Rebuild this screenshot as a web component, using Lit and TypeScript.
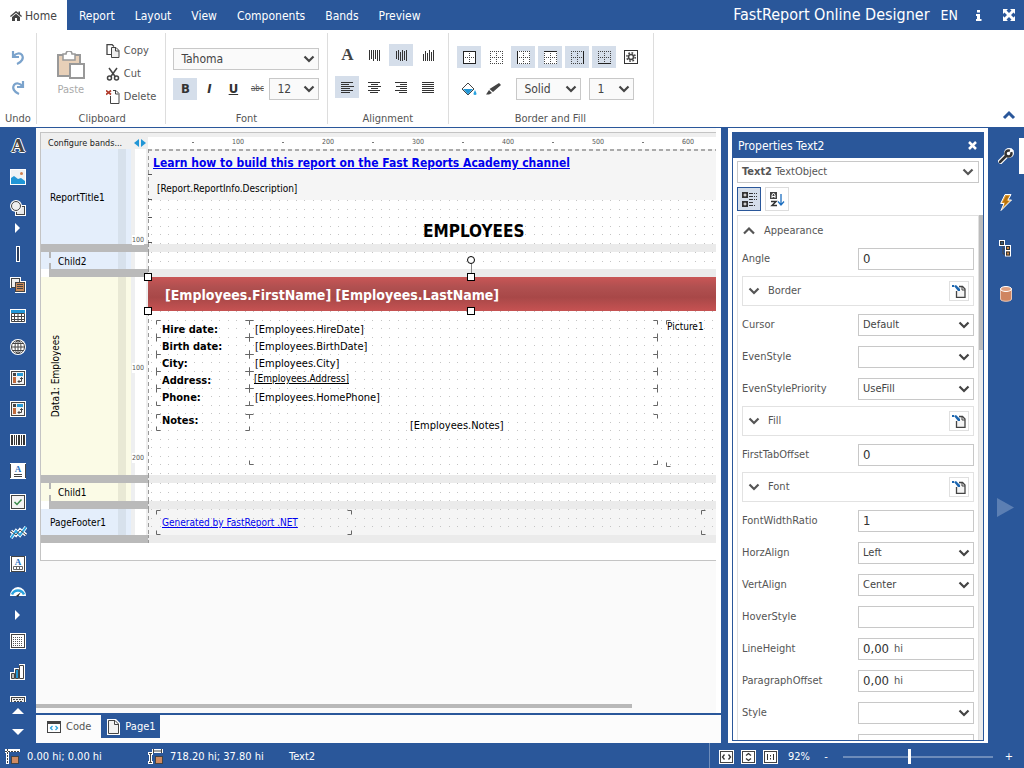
import { LitElement, html, svg, css, nothing, TemplateResult } from "lit";
import { customElement, state } from "lit/decorators.js";
import { classMap } from "lit/directives/class-map.js";
import { styleMap } from "lit/directives/style-map.js";

type Corner = [number, number, number, number];
type Label = { x: number; y: number; text: string; cls: string; link?: boolean };
type Band = {
  name: string;
  kind: "blue" | "yellow";
  height: number;
  child?: boolean;
  vertical?: boolean;
  marks?: number[];
  shade?: number;
  boxes?: Corner[];
  labels?: Label[];
  ticks?: number[];
  selected?: boolean;
};

const icon = (w: number, h: number, body: TemplateResult, cls = "") =>
  html`<svg class="ico ${cls}" width=${w} height=${h} viewBox="0 0 ${w} ${h}" aria-hidden="true">${body}</svg>`;

const chevron = (cls = "chev") =>
  html`<svg class=${cls} width="12" height="12" viewBox="0 0 12 12" aria-hidden="true">
    <path d="M1.500 3.500L6 8l4.500-4.500" fill="none" stroke="currentColor" stroke-width="2.200" />
  </svg>`;

const rowsPath = (rows: [number, number][], y0 = 1, step = 2) =>
  rows.map(([a, b], i) => `M${a} ${y0 + i * step}h${b - a}v1h${a - b}z`).join("");

const colsPath = (cols: [number, number][], x0 = 1, step = 2) =>
  cols.map(([a, b], i) => `M${x0 + i * step} ${a}h1v${b - a}h-1z`).join("");

const solid = (d: string) =>
  icon(13, 13, svg`<path d=${d} fill="#333" shape-rendering="crispEdges" />`);

const BARS = {
  top: solid(colsPath([[1, 11], [1, 10], [1, 12], [1, 10], [1, 12], [1, 12]])),
  middle: solid(colsPath([[2, 10], [1, 11], [3, 12], [1, 12], [2, 11], [1, 12]])),
  bottom: solid(colsPath([[5, 12], [2, 12], [4, 12], [1, 12], [3, 12], [1, 12]])),
};
const LINES = {
  left: solid(rowsPath([[0, 12], [0, 8], [0, 13], [0, 9], [0, 12], [0, 9]])),
  center: solid(rowsPath([[0, 12], [3, 10], [0, 13], [3, 10], [0, 12], [2, 10]])),
  right: solid(rowsPath([[0, 12], [5, 12], [1, 12], [5, 12], [0, 12], [4, 12]])),
  justify: solid(rowsPath([[0, 12], [0, 12], [0, 12], [0, 12], [0, 12], [0, 12]])),
};

const borderIcon = (side: string) =>
  icon(
    13,
    13,
    svg`<rect width="13" height="13" fill=${side === "none" || side === "right" || side === "bottom" ? "none" : "#fff"} />
      <path d="M0 .5h13M0 6.5h13M0 12.5h13M.5 0v13M6.5 0v13M12.5 0v13" fill="none" stroke="#444" stroke-dasharray="1 1" shape-rendering="crispEdges" />
      <path
        d=${
          ({ all: "M.5 .5h12v12h-12z", none: "", left: "M.5 0v13", top: "M0 .5h13", right: "M12.5 0v13", bottom: "M0 12.5h13" } as Record<string, string>)[side]
        }
        fill="none" stroke="#222" shape-rendering="crispEdges" />`
  );

const tile = (body: TemplateResult) =>
  icon(16, 16, svg`<rect width="16" height="16" fill="#fff" /><rect x="1.5" y="1.5" width="13" height="13" fill="#f4f4f4" stroke="#444" />${body}`);

const matrixIcon = tile(svg`<path d="M3 3h3v3h-3z" fill="#444" /><path d="M7 3h6v3h-6z" fill="#2a9bd6" /><path d="M3 7h3v6h-3z" fill="#c06a3c" />
  <path d="M8 11.500h3.500v-4M9.500 10l-1.500 1.500 1.500 1.500M10 9l1.500-1.500 1.500 1.500" fill="none" stroke="#444" />`);

const TOOLS: { name: string; art: TemplateResult; more?: boolean }[] = [
  { name: "Text", art: html`<span class="glyph-a">A</span>` },
  {
    name: "Picture",
    art: icon(16, 16, svg`<rect width="16" height="16" fill="#fff" /><rect x="1" y="1" width="14" height="14" fill="#eef2f5" />
      <path d="M1 15v-6l3-2 4 3 3-1 4 3v3z" fill="#2196d6" /><circle cx="11.500" cy="4.500" r="1.500" fill="#d08050" />`),
  },
  {
    name: "Shape",
    more: true,
    art: icon(16, 16, svg`<rect x="5" y="5" width="11" height="11" fill="#fff" /><rect x="6.500" y="6.500" width="8" height="8" fill="#e8e8e8" stroke="#444" />
      <circle cx="6" cy="6" r="6" fill="#fff" /><circle cx="6" cy="6" r="4.500" fill="#eee" stroke="#444" />`),
  },
  { name: "Line", art: icon(4, 16, svg`<rect x=".5" y=".5" width="3" height="15" fill="#2b3c5a" stroke="#fff" />`) },
  {
    name: "Subreport",
    art: icon(16, 16, svg`<path d="M0 0h11v4h5v12H5v-5H0z" fill="#fff" /><rect x="1.500" y="1.500" width="8" height="9" fill="#eee" stroke="#444" />
      <rect x="5.500" y="5.500" width="9" height="9" fill="#c98a5a" stroke="#444" /><path d="M7 7.500h6M7 9.500h6M7 11.500h6" stroke="#444" />`),
  },
  {
    name: "Table",
    art: icon(16, 14, svg`<rect width="16" height="14" fill="#fff" /><rect x="1" y="1" width="14" height="3" fill="#2196d6" />
      <path d="M1.500 4.500h13v8h-13zM1 7.500h14M1 10.500h14M4.500 4v9M8 4v9M11.500 4v9" fill="none" stroke="#444" />`),
  },
  {
    name: "Map",
    art: icon(16, 16, svg`<circle cx="8" cy="8" r="8" fill="#fff" /><g fill="none" stroke="#444"><circle cx="8" cy="8" r="6.500" /><ellipse cx="8" cy="8" rx="3" ry="6.500" />
      <path d="M8 1v14M1 8h14M2.500 4.500h11M2.500 11.500h11" /></g>`),
  },
  { name: "Matrix", art: matrixIcon },
  { name: "Advanced matrix", art: matrixIcon },
  {
    name: "Barcode",
    art: icon(16, 12, svg`<rect width="16" height="12" fill="#fff" /><path d="M1 1h2v10h-2zM4 1h1v10h-1zM6 1h1v10h-1zM8 1h2v10h-2zM11 1h1v10h-1zM13 1h2v10h-2z" fill="#333" />`),
  },
  {
    name: "Rich text",
    art: icon(16, 16, svg`<rect width="16" height="16" fill="#fff" /><path d="M.5 1v14M15.500 1v14" stroke="#444" /><text x="8" y="9" class="mini-a">A</text><path d="M4 11.500h8M4 13.500h8" stroke="#444" />`),
  },
  { name: "Check box", art: tile(svg`<path d="M4.500 8l2.500 2.500 4.500-5" fill="none" stroke="#3a8a4a" stroke-width="1.500" />`) },
  {
    name: "Sparkline",
    art: icon(17, 15, svg`<path d="M1 13l5-7 4 4 6-8M1 6l5 4 4-5 6 5" fill="none" stroke="#fff" stroke-width="3.500" />
      <path d="M1 13l5-7 4 4 6-8" fill="none" stroke="#2aa3e0" stroke-width="2" /><path d="M1 6l5 4 4-5 6 5" fill="none" stroke="#444" />`),
  },
  {
    name: "Cellular text",
    art: icon(16, 16, svg`<rect width="16" height="16" fill="#fff" /><rect x="1.500" y=".5" width="13" height="15" fill="none" stroke="#444" />
      <text x="8" y="9" class="mini-a">A</text><path d="M3.500 10.500h9v3h-9zM6.500 10v4M9.500 10v4" fill="none" stroke="#666" />`),
  },
  {
    name: "Gauge",
    more: true,
    art: icon(16, 17, svg`<path d="M0 10a8 9 0 0 1 16 0z" fill="#fff" /><path d="M2 8.500a6.500 6.500 0 0 1 12 0" fill="none" stroke="#2aa3e0" stroke-width="2.500" />
      <path d="M6 10l5-4-3 5z" fill="#333" />`),
  },
  {
    name: "HTML",
    art: icon(16, 16, svg`<rect width="16" height="16" fill="#fff" /><rect x="1.500" y="1.500" width="13" height="13" fill="#fff" stroke="#444" />
      <path d="M3 4.500h10M3 6.500h10M3 8.500h10M3 10.500h10M3 12.500h10" stroke="#555" stroke-dasharray="1 1" shape-rendering="crispEdges" />`),
  },
  {
    name: "Chart",
    art: icon(16, 16, svg`<path d="M0 8h4V4h5V0h6v16H0z" fill="#fff" /><path d="M1.500 9.500h3v5h-3z" fill="#bbb" stroke="#444" /><path d="M5.500 5.500h3v9h-3z" fill="#2196d6" stroke="#444" />
      <path d="M9.500 1.500h4v13h-4z" fill="#fff" stroke="#444" />`),
  },
  {
    name: "Digital signature",
    art: icon(16, 14, svg`<rect width="16" height="14" fill="#fff" /><rect x="1.500" y="1.500" width="13" height="11" fill="#eee" stroke="#444" /><path d="M3 3.500h10M4 5.500h8" stroke="#444" stroke-dasharray="2 1" />`),
  },
];

const ROWS = [43, 60, 77, 94, 111];
const BANDS: Band[] = [
  {
    name: "ReportTitle1",
    kind: "blue",
    height: 95,
    marks: [100],
    shade: 51,
    ticks: [26, 51, 69, 94],
    labels: [
      { x: 5, y: 13, text: "Learn how to build this report on the Fast Reports Academy channel", cls: "t12 bold", link: true },
      { x: 9, y: 39, text: "[Report.ReportInfo.Description]", cls: "t10" },
      { x: 275, y: 81, text: "EMPLOYEES", cls: "t17 bold" },
    ],
  },
  { name: "Child2", kind: "blue", height: 17, child: true },
  {
    name: "Data1: Employees",
    kind: "yellow",
    height: 198,
    vertical: true,
    marks: [100, 200],
    selected: true,
    boxes: [
      ...ROWS.map((y): Corner => [9, y, 93, 17]),
      ...ROWS.map((y): Corner => [102, y, 408, 17]),
      [9, 137, 93, 16],
      [102, 137, 408, 50],
      [519, 43, 200, 146],
    ],
    labels: [
      { x: 17, y: 17, text: "[Employees.FirstName] [Employees.LastName]", cls: "t14 bold white" },
      { x: 14, y: 52, text: "Hire date:", cls: "t11 bold" },
      { x: 14, y: 69, text: "Birth date:", cls: "t11 bold" },
      { x: 14, y: 86, text: "City:", cls: "t11 bold" },
      { x: 14, y: 103, text: "Address:", cls: "t11 bold" },
      { x: 14, y: 120, text: "Phone:", cls: "t11 bold" },
      { x: 14, y: 143, text: "Notes:", cls: "t11 bold" },
      { x: 107, y: 52, text: "[Employees.HireDate]", cls: "t11" },
      { x: 107, y: 69, text: "[Employees.BirthDate]", cls: "t11" },
      { x: 107, y: 86, text: "[Employees.City]", cls: "t11" },
      { x: 106, y: 101, text: "[Employees.Address]", cls: "t10 underline" },
      { x: 107, y: 120, text: "[Employees.HomePhone]", cls: "t11" },
      { x: 262, y: 148, text: "[Employees.Notes]", cls: "t11" },
      { x: 519, y: 49, text: "Picture1", cls: "t10" },
    ],
  },
  { name: "Child1", kind: "yellow", height: 18, child: true },
  {
    name: "PageFooter1",
    kind: "blue",
    height: 26,
    shade: 26,
    boxes: [
      [9, 1, 195, 24],
      [554, 1, 195, 24],
    ],
    labels: [{ x: 14, y: 13, text: "Generated by FastReport .NET", cls: "t10", link: true }],
  },
];

type Prop =
  | { label: string; type: "text"; value: string; unit?: string }
  | { label: string; type: "select"; value: string }
  | { label: string; type: "group" };

const PROPS: Prop[] = [
  { label: "Angle", type: "text", value: "0" },
  { label: "Border", type: "group" },
  { label: "Cursor", type: "select", value: "Default" },
  { label: "EvenStyle", type: "select", value: "" },
  { label: "EvenStylePriority", type: "select", value: "UseFill" },
  { label: "Fill", type: "group" },
  { label: "FirstTabOffset", type: "text", value: "0" },
  { label: "Font", type: "group" },
  { label: "FontWidthRatio", type: "text", value: "1" },
  { label: "HorzAlign", type: "select", value: "Left" },
  { label: "VertAlign", type: "select", value: "Center" },
  { label: "HoverStyle", type: "text", value: "" },
  { label: "LineHeight", type: "text", value: "0,00", unit: "hi" },
  { label: "ParagraphOffset", type: "text", value: "0,00", unit: "hi" },
  { label: "Style", type: "select", value: "" },
  { label: "", type: "text", value: "" },
];

const cornerPath = ([x, y, w, h]: Corner) => {
  const r = x + w;
  const b = y + h;
  return `M${x} ${y + 4}v-4h4M${r - 4} ${y}h4v4M${r} ${b - 4}v4h-4M${x + 4} ${b}h-4v-4`;
};

@customElement("app-root")
export class AppRoot extends LitElement {
  @state() private tab = "Home";

  static styles = css`
    :host {
      --blue: #2a579a;
      --line: #c8c8c8;
      --on: #d5deea;
      display: grid;
      grid-template-rows: 30px 98px minmax(0, 1fr) 25px;
      height: 100vh;
      overflow: hidden;
      background: #fff;
      color: #555;
      font: 11px/16px "DejaVu Sans Condensed", "DejaVu Sans", sans-serif;
    }
    * {
      box-sizing: border-box;
    }
    button,
    select,
    input {
      font: inherit;
      color: inherit;
      margin: 0;
      padding: 0;
      border: 0;
      background: none;
      border-radius: 0;
      outline: none;
    }
    button {
      display: flex;
      align-items: center;
      justify-content: center;
    }
    svg {
      display: block;
      flex: none;
    }
    .mini-a {
      font: bold 9px "Liberation Serif", serif;
      fill: #2a6fc0;
      text-anchor: middle;
    }

    /* top bar */
    .top {
      display: flex;
      background: var(--blue);
      color: #fff;
      font-size: 12px;
    }
    .top nav {
      display: flex;
      flex: 1;
    }
    .top nav button {
      gap: 3px;
      padding: 2px 10px 0;
    }
    .top nav button.active {
      background: #fff;
      color: #444;
      margin-right: 2px;
    }
    .brand {
      font-size: 16px;
      line-height: 30px;
      padding-right: 11px;
    }
    .top > button {
      width: 30px;
    }
    .top > button.lang {
      width: auto;
      font-size: 14px;
      padding-right: 6px;
    }

    /* ribbon */
    .ribbon {
      display: flex;
      border-bottom: 1px solid var(--blue);
      padding: 3px 0;
    }
    .group {
      display: flex;
      flex-direction: column;
      justify-content: space-between;
      border-right: 1px solid #ddd;
      padding: 11px 10px 0 8px;
    }
    .group > .name {
      text-align: center;
      height: 10px;
      line-height: 10px;
    }
    .tools {
      display: flex;
      flex-direction: column;
      gap: 10px;
    }
    .line {
      display: flex;
      gap: 3px;
    }
    .line button {
      width: 24px;
      height: 22px;
    }
    .line button.on {
      background: var(--on);
    }
    .undo {
      padding: 14px 5px 0 5px;
    }
    .undo .tools {
      align-items: center;
      gap: 8px;
    }
    .undo button {
      height: 22px;
    }
    .clip {
      padding: 8px 9px 0 11px;
    }
    .clip .tools {
      flex-direction: row;
      gap: 12px;
    }
    .paste {
      flex-direction: column;
      gap: 3px;
      width: 46px;
      color: #aaa;
    }
    .clip-list {
      display: flex;
      flex-direction: column;
      gap: 3px;
    }
    .clip-list button {
      justify-content: flex-start;
      gap: 4px;
      height: 20px;
    }
    .font {
      width: 162px;
      padding: 15px 8px 0 7px;
    }
    .font .tools {
      gap: 8px;
      font-size: 12px;
    }
    .font .line,
    .fill-line {
      gap: 0;
    }
    .font .line > button {
      font-size: 13px;
    }
    .font .line > button.abc {
      font-size: 8px;
      text-decoration: line-through;
    }
    .align {
      padding: 11px 8px 0 7px;
    }
    .borders {
      padding-top: 13px;
    }
    .fill-line .sel {
      font-size: 12px;
    }
    .w65 {
      width: 65px;
      margin: 0 8px 0 11px;
    }
    .w45 {
      width: 45px;
    }
    .w50 {
      width: 50px;
    }
    .line .serif {
      font: bold 17px/20px "Liberation Serif", serif;
      color: #444;
    }
    .i {
      font-style: italic;
    }
    .u {
      text-decoration: underline;
    }
    .b,
    .i,
    .u {
      font-weight: bold;
      color: #333;
    }
    .collapse {
      margin: auto 8px 4px auto;
      color: var(--blue);
    }
    .sel {
      display: grid;
      align-items: center;
      color: #444;
    }
    .sel > * {
      grid-area: 1 / 1;
    }
    .sel select {
      appearance: none;
      width: 100%;
      height: 22px;
      border: 1px solid var(--line);
      background: #fafafa;
      padding: 0 7px;
    }
    .sel .chev {
      justify-self: end;
      margin-right: 4px;
      pointer-events: none;
    }

    /* workspace */
    .work {
      display: grid;
      grid-template-columns: 36px minmax(0, 1fr) 260px 36px;
      min-height: 0;
      background: var(--blue);
    }
    .toolbox {
      display: flex;
      flex-direction: column;
      min-height: 0;
    }
    .toolbox .items {
      flex: 1;
      min-height: 0;
      overflow: hidden;
      padding-top: 2px;
    }
    .toolbox button {
      width: 36px;
      height: 31px;
    }
    .toolbox .more {
      height: 15px;
      align-items: flex-start;
    }
    .toolbox .page {
      height: 18px;
    }
    .toolbox .page.down {
      height: 23px;
    }
    .glyph-a {
      font: bold 19px/20px "Liberation Serif", serif;
      color: #444;
      text-shadow: 1px 0 #fff, -1px 0 #fff, 0 1px #fff, 0 -1px #fff;
    }
    .editor {
      display: flex;
      flex-direction: column;
      min-width: 0;
      background: #fff;
      margin-right: 7px;
    }
    .surface {
      flex: 1;
      min-height: 0;
      display: flex;
      flex-direction: column;
      background: #fafafa;
      margin-right: 5px;
      padding: 4px 0 5px 4px;
      overflow: hidden;
    }
    .page-sheet {
      background: #fff;
      border: 1px solid #c4c4c4;
      border-right: 0;
      padding-bottom: 17px;
      color: #000;
      font-size: 10px;
    }
    .hscroll {
      width: 596px;
      height: 4px;
      background: #b8b8b8;
      margin: auto 0 0 -4px;
    }
    .head {
      display: grid;
      grid-template-columns: 107px minmax(0, 1fr);
      height: 16px;
      background: #efefef;
    }
    .head .cfg {
      display: flex;
      justify-content: space-between;
      align-items: center;
      padding: 2px 2px 0 7px;
      color: #222;
      font-size: 9px;
    }
    .ruler {
      display: flex;
      overflow: hidden;
      background: #fff;
      margin: 4px 0 2px;
      color: #555;
      font-size: 7px;
      line-height: 11px;
    }
    .ruler span {
      flex: none;
      width: 90px;
      display: flex;
      justify-content: space-between;
      padding-left: 44px;
    }
    .ruler b {
      font-weight: normal;
      width: 14px;
      margin-right: -7px;
      text-align: center;
    }
    .ruler span::before {
      content: "";
      width: 2px;
      height: 1px;
      background: #777;
      margin-top: 5px;
    }
    .band {
      display: grid;
      grid-template-columns: 77px 8px 9px 13px minmax(0, 1fr);
    }
    .band .title {
      display: flex;
      align-items: center;
      padding-left: 9px;
    }
    .band .title span {
      padding-top: 2px;
    }
    .band.blue .title,
    .band.blue .pad {
      background: #e4eefb;
    }
    .band.yellow .title,
    .band.yellow .pad {
      background: #fbfbe6;
    }
    .band.blue .stripe {
      background: #d7e1ec;
    }
    .band.yellow .stripe {
      background: #e9e9d5;
    }
    .band .pad {
      border-right: 4px solid #eeeff0;
    }
    .band.child .title::before {
      content: "";
      align-self: stretch;
      border-left: 2px dashed #b4b4b4;
      margin-right: 7px;
    }
    .band.child .title {
      padding-left: 8px;
    }
    .band.vertical .title {
      justify-content: center;
      padding: 0 47px 0 0;
    }
    .band.vertical .title span {
      writing-mode: vertical-rl;
      transform: rotate(180deg);
      white-space: nowrap;
      padding: 0;
    }
    .vruler {
      position: relative;
      background: #fff;
      border-right: 2px solid #eee;
      color: #555;
      font-size: 7px;
      line-height: 10px;
    }
    .vruler span {
      position: absolute;
      right: 2px;
      background: #fff;
    }
    .bar {
      grid-column: 1 / 5;
      height: 8px;
      background: #bababa;
    }
    .child .bar {
      margin-left: 8px;
    }
    .bar-r {
      height: 8px;
      background: #ebebeb;
      border-left: 1px dashed #999;
    }
    .area {
      position: relative;
      min-width: 0;
      overflow: hidden;
      background: #fff;
    }
    .selected .area {
      overflow: visible;
    }
    .area > svg {
      position: absolute;
      left: 0;
      top: 0;
      width: 100%;
      height: 100%;
    }
    .hero {
      position: absolute;
      left: 0;
      right: 0;
      top: 0;
      height: 34px;
      background: linear-gradient(#c95656, #b05050 30%, #a84848 60%, #c65252);
    }
    .obj {
      position: absolute;
      white-space: nowrap;
      line-height: 18px;
      color: #000;
    }
    a.obj {
      color: #0000ee;
    }
    .obj.white {
      color: #fff;
    }
    .bold {
      font-weight: bold;
    }
    .underline {
      text-decoration: underline;
    }
    .t10 {
      font-size: 10px;
    }
    .t11 {
      font-size: 11px;
    }
    .t12 {
      font-size: 12px;
    }
    .t14 {
      font-size: 14px;
    }
    .t17 {
      font-size: 17px;
    }
    .handle {
      position: absolute;
      width: 8px;
      height: 8px;
      margin: -4px;
      border: 1px solid #000;
      background: #fff;
    }
    .handle.round {
      border-radius: 50%;
    }
    .stem {
      position: absolute;
      width: 1px;
      height: 12px;
      background: #888;
    }
    .tabs {
      display: flex;
      height: 30px;
      border-top: 2px solid var(--blue);
      background: #fcfcfc;
    }
    .tabs button {
      height: 23px;
      gap: 5px;
      padding: 0 10px 0 11px;
    }
    .tabs button.on {
      background: var(--blue);
      color: #fff;
      padding: 0 4px 0 6px;
    }

    /* property panel */
    .side {
      background: #fff;
      padding: 4px 4px 2px;
      min-height: 0;
    }
    .panel {
      height: 100%;
      display: flex;
      flex-direction: column;
      border: 1px solid var(--blue);
    }
    .panel header {
      display: flex;
      justify-content: space-between;
      align-items: center;
      background: var(--blue);
      color: #fff;
      height: 25px;
      flex: none;
      padding: 0 6px 0 5px;
      font-size: 12px;
    }
    .panel h2 {
      font: inherit;
      margin: 0;
    }
    .object {
      display: flex;
      width: auto;
      height: 22px;
      margin: 3px 4px 4px;
      border: 1px solid var(--line);
      justify-content: space-between;
      padding: 0 4px;
      flex: none;
    }
    .modes {
      display: flex;
      gap: 4px;
      padding: 0 4px 4px;
    }
    .modes button {
      width: 24px;
      height: 24px;
      border: 1px solid #ddd;
    }
    .modes button.on {
      border-color: var(--blue);
      background: var(--on);
    }
    .list {
      flex: 1;
      min-height: 0;
      display: grid;
      grid-template-columns: minmax(0, 1fr) 4px;
      grid-template-rows: minmax(0, 1fr);
      margin-left: 4px;
    }
    .props {
      overflow: hidden;
      border: solid #e0e0e0;
      border-width: 1px 1px 0 1px;
      padding: 0 4px;
    }
    .thumb {
      height: 135px;
      background: #bcbcbc;
    }
    .track {
      background: #ececec;
    }
    .cat {
      height: 27px;
      gap: 8px;
      padding-top: 3px;
    }
    .prop {
      display: grid;
      grid-template-columns: minmax(0, 1fr) 116px;
      align-items: center;
      height: 32px;
    }
    .prop .sel select,
    .field {
      background: #fff;
      padding-left: 4px;
    }
    .field {
      display: flex;
      align-items: center;
      height: 22px;
      border: 1px solid var(--line);
    }
    .field input {
      width: 100%;
      font-size: 13px;
      color: #333;
    }
    .field.unit input {
      width: 31px;
    }
    .sub {
      display: flex;
      justify-content: space-between;
      align-items: center;
      height: 30px;
      margin: 1px 0 3px;
      border: 1px solid #e2e2e2;
      padding: 0 4px 0 5px;
    }
    .sub button {
      gap: 8px;
    }
    .sub .edit {
      width: 20px;
      height: 20px;
      border: 1px solid #e0e0e0;
    }
    .rail {
      display: flex;
      flex-direction: column;
      padding-top: 10px;
    }
    .rail button {
      height: 36px;
      margin-bottom: 10px;
      border-right: 5px solid transparent;
      padding-left: 4px;
    }
    .rail button.on {
      border-color: #fff;
    }
    .rail button.run {
      margin-top: 167px;
    }

    /* status bar */
    .status {
      display: flex;
      align-items: center;
      background: var(--blue);
      color: #fff;
    }
    .status .pos {
      display: flex;
      align-items: center;
      gap: 7px;
      padding: 2px 0 0 5px;
      width: 143px;
    }
    .status .sp {
      flex: 1;
      padding: 2px 0 0 3px;
    }
    .zoom {
      display: flex;
      align-items: center;
      border-left: 1px solid #6d8cba;
      height: 25px;
      padding: 2px 9px 0 9px;
      gap: 7px;
    }
    .zoom output {
      width: 28px;
      padding-left: 3px;
    }
    .zoom .pm {
      width: 12px;
    }
    .zoom input {
      appearance: none;
      width: 150px;
      height: 15px;
      margin: 0 3px 0 4px;
    }
    .zoom input::-webkit-slider-runnable-track {
      height: 2px;
      background: #6d8cba;
    }
    .zoom input::-webkit-slider-thumb {
      appearance: none;
      width: 3px;
      height: 15px;
      margin-top: -7px;
      background: #fff;
    }
  `;

  private select(label: string, value: string, cls = "") {
    return html`<label class="sel ${cls}">
      <select aria-label=${label}>
        <option>${value}</option>
      </select>
      ${chevron()}
    </label>`;
  }

  private topBar() {
    const names = ["Home", "Report", "Layout", "View", "Components", "Bands", "Preview"];
    const home = icon(
      12,
      12,
      svg`<path d="M6 1L0 6l.8 1L6 2.700 11.200 7 12 6 10 4.300V1.500H8.500V3z" fill="#444" /><path d="M6 3.700L2 7v4h3V8h2v3h3V7z" fill="#444" />`
    );
    return html`<header class="top">
      <nav>
        ${names.map(
          (n) => html`<button class=${classMap({ active: this.tab === n })} @click=${() => (this.tab = n)}>${n === "Home" ? home : nothing}${n}</button>`
        )}
      </nav>
      <span class="brand">FastReport Online Designer</span>
      <button class="lang">EN</button>
      <button aria-label="About">
        ${icon(6, 11, svg`<path d="M1 0h3v2.500H1zM0 4h4v5h1.500v2H0V9h1V6H0z" fill="#fff" />`)}
      </button>
      <button aria-label="Full screen">
        ${icon(12, 12, svg`<path d="M0 0h5L3.500 1.500 6 4l2.500-2.500L7 0h5v5l-1.500-1.500L8 6l2.500 2.500L12 7v5H7l1.500-1.500L6 8l-2.500 2.500L5 12H0V7l1.500 1.500L4 6 1.500 3.500 0 5z" fill="#fff" />`)}
      </button>
    </header>`;
  }

  private ribbon() {
    return html`<section class="ribbon" aria-label="Home">
      <div class="group undo">
        <div class="tools">
          <button aria-label="Undo">${icon(14, 16, svg`<path d="M2 1v6h6M2.500 6.500C5 3 9 2.500 11 5c2 3 0 7-5 9" fill="none" stroke="#7ba3cc" stroke-width="2.200" />`)}</button>
          <button aria-label="Redo">${icon(14, 16, svg`<path d="M12 1v6H6M11.500 6.500C9 3 5 2.500 3 5c-2 3 0 7 5 9" fill="none" stroke="#7ba3cc" stroke-width="2.200" />`)}</button>
        </div>
        <div class="name">Undo</div>
      </div>
      <div class="group clip">
        <div class="tools">
          <button class="paste">
            ${icon(
              28,
              28,
              svg`<path d="M1 4h22v21H1z" fill="#e8d0b8" stroke="#999" stroke-width="2" /><path d="M6 3h3a3 3 0 0 1 6 0h3v6H6z" fill="#fff" stroke="#999" stroke-width="1.500" />
              <path d="M13 13h14v14H13z" fill="#fff" stroke="#999" stroke-width="2" />`
            )}
            Paste
          </button>
          <div class="clip-list">
            <button>
              ${icon(14, 14, svg`<path d="M1 11V.5h5l2 2" fill="none" stroke="#444" stroke-width="1.300" /><path d="M1 10.500h4" stroke="#444" /><path d="M5.500 3.500h4.500l3 3v7H5.500z" fill="#eee" stroke="#444" /><path d="M9.500 3.500v3.500h3.500" fill="none" stroke="#444" />`)}
              Copy
            </button>
            <button>
              ${icon(14, 14, svg`<path d="M3 1l6.500 9M11 1L4.500 10" stroke="#444" stroke-width="1.500" fill="none" /><circle cx="3.500" cy="11" r="2" fill="none" stroke="#444" stroke-width="1.500" /><circle cx="10.500" cy="11" r="2" fill="none" stroke="#444" stroke-width="1.500" />`)}
              Cut
            </button>
            <button>
              ${icon(14, 14, svg`<path d="M4.500 6v7.500h8.500V3.500l-3-3H7" fill="#fff" stroke="#444" /><path d="M9.500 1v3h3" fill="none" stroke="#444" /><path d="M0 .5l5 4M5 .5l-5 4" stroke="#b03a2a" stroke-width="1.700" />`)}
              Delete
            </button>
          </div>
        </div>
        <div class="name">Clipboard</div>
      </div>
      <div class="group font">
        <div class="tools">
          ${this.select("Font name", "Tahoma")}
          <div class="line">
            <button class="on b">B</button><button class="i">I</button><button class="u">U</button><button class="abc">abc</button>
            ${this.select("Font size", "12", "w50")}
          </div>
        </div>
        <div class="name">Font</div>
      </div>
      <div class="group align">
        <div class="tools">
          <div class="line">
            <button class="serif" aria-label="Text angle">A</button>
            <button aria-label="Top">${BARS.top}</button>
            <button class="on" aria-label="Middle">${BARS.middle}</button>
            <button aria-label="Bottom">${BARS.bottom}</button>
          </div>
          <div class="line">
            <button class="on" aria-label="Left">${LINES.left}</button>
            <button aria-label="Center">${LINES.center}</button>
            <button aria-label="Right">${LINES.right}</button>
            <button aria-label="Justify">${LINES.justify}</button>
          </div>
        </div>
        <div class="name">Alignment</div>
      </div>
      <div class="group borders">
        <div class="tools">
          <div class="line">
            ${["all", "none", "left", "top", "right", "bottom"].map(
              (s) => html`<button class=${classMap({ on: s !== "none" })} aria-label="Border ${s}">${borderIcon(s)}</button>`
            )}
            <button aria-label="Border settings">
              ${icon(14, 14, svg`<rect x=".5" y=".5" width="13" height="13" fill="#fff" stroke="#333" /><circle cx="7" cy="7" r="2.500" fill="none" stroke="#444" stroke-width="1.500" />
                <circle cx="7" cy="7" r="4.200" fill="none" stroke="#444" stroke-width="1.500" stroke-dasharray="1.700 1.600" />`)}
            </button>
          </div>
          <div class="line fill-line">
            <button aria-label="Fill">
              ${icon(16, 14, svg`<path d="M7 1l6 6-6 6-6-6z" fill="#fff" stroke="#444" /><path d="M2 7h10l-5 5.500z" fill="#2196d6" /><path d="M7 1L5 3" stroke="#444" /><path d="M14 8l1.300 3a1.400 1.400 0 1 1-2.600 0z" fill="#2aa3e0" />`)}
            </button>
            <button aria-label="Line colour">
              ${icon(15, 14, svg`<path d="M13 1l2 2-8 7-3.500-3zM3 8l3 3-3 1.500H0z" fill="#444" />`)}
            </button>
            ${this.select("Line style", "Solid", "w65")}${this.select("Line width", "1", "w45")}
          </div>
        </div>
        <div class="name">Border and Fill</div>
      </div>
      <button class="collapse" aria-label="Collapse">${icon(14, 10, svg`<path d="M2 8l5-5 5 5" fill="none" stroke="#2a579a" stroke-width="3" />`)}</button>
    </section>`;
  }

  private toolbox() {
    const right = icon(6, 10, svg`<path d="M0 0l5 5-5 5z" fill="#fff" />`);
    return html`<aside class="toolbox" aria-label="Components">
      <div class="items">
        ${TOOLS.map(
          (t) => html`<button aria-label=${t.name}>${t.art}</button>${t.more ? html`<button class="more" aria-label="More ${t.name}">${right}</button>` : nothing}`
        )}
      </div>
      <button class="page" aria-label="Scroll up">${icon(12, 6, svg`<path d="M6 0l6 6H0z" fill="#fff" />`)}</button>
      <button class="page down" aria-label="Scroll down">${icon(12, 6, svg`<path d="M0 0h12L6 6z" fill="#fff" />`)}</button>
    </aside>`;
  }

  private bandView(b: Band, i: number) {
    const dots = `dots${i}`;
    const flags = classMap({ band: true, [b.kind]: true, child: !!b.child, vertical: !!b.vertical, selected: !!b.selected });
    return html`<div class=${flags}>
      <div class="title" style=${styleMap({ height: `${b.height}px` })}><span>${b.name}</span></div>
      <div class="stripe"></div>
      <div class="pad"></div>
      <div class="vruler">${(b.marks ?? []).map((m) => html`<span style=${styleMap({ top: `${(m * 9) / 10 - 4}px` })}>${m}</span>`)}</div>
      <div class="area">
        <svg aria-hidden="true">
          <defs>
            <pattern id=${dots} width="17" height="17" patternUnits="userSpaceOnUse">
              <path d="M3 0h1v1h-1zM12 0h1v1h-1zM3 9h1v1h-1zM12 9h1v1h-1z" fill="#c4c4c4" />
            </pattern>
          </defs>
          ${b.shade ? svg`<rect width="100%" height=${b.shade} fill="#f5f5f5" />` : nothing}
          <rect y=${b.shade && b.height > 50 ? b.shade : 0} width="100%" height="100%" fill="url(#${dots})" />
          ${i === 0 ? svg`<path d="M0 1h2000" stroke="#aaa" stroke-width="2" stroke-dasharray="4 3" />` : nothing}
          <path d="M.5 0v400" stroke="#999" stroke-width="1" stroke-dasharray="4 3" />
          ${(b.ticks ?? []).map((y) => svg`<path d="M0 ${y - 0.5}h4" stroke="#555" />`)}
          <g transform="translate(-.5 .5)">${(b.boxes ?? []).map((c) => svg`<path d=${cornerPath(c)} fill="none" stroke="#666" />`)}</g>
        </svg>
        ${b.selected ? html`<div class="hero"></div>` : nothing}
        ${(b.labels ?? []).map((l) => {
          const pos = styleMap({ left: `${l.x}px`, top: `${l.y - 8}px` });
          return l.link ? html`<a class="obj ${l.cls}" href="#" style=${pos}>${l.text}</a>` : html`<span class="obj ${l.cls}" style=${pos}>${l.text}</span>`;
        })}
        ${b.selected
          ? html`<i class="stem" style=${styleMap({ left: "323px", top: "-13px" })}></i>
              <i class="handle round" style=${styleMap({ left: "323px", top: "-17px" })}></i>
              ${[0, 323].map((x) => [0, 34].map((y) => html`<i class="handle" style=${styleMap({ left: `${x}px`, top: `${y}px` })}></i>`))}`
          : nothing}
      </div>
      <div class="bar"></div>
      <div class="bar-r"></div>
    </div>`;
  }

  private editor() {
    return html`<main class="editor">
      <div class="surface">
        <div class="page-sheet">
          <div class="head">
            <div class="cfg">Configure bands... ${icon(12, 8, svg`<path d="M5 0v8L0 4zM7 0v8l5-4z" fill="#2196d6" />`)}</div>
            <div class="ruler">${[100, 200, 300, 400, 500, 600].map((n) => html`<span><b>${n}</b></span>`)}</div>
          </div>
          ${BANDS.map((b, i) => this.bandView(b, i))}
        </div>
        <div class="hscroll"></div>
      </div>
      <div class="tabs">
        <button>
          ${icon(14, 12, svg`<rect x=".5" y=".5" width="13" height="11" fill="#fff" stroke="#444" /><path d="M0 0h14v3H0z" fill="#444" /><path d="M5.500 5L3.500 7l2 2M8.500 5l2 2-2 2" fill="none" stroke="#2aa3e0" stroke-width="1.300" />`)}
          Code
        </button>
        <button class="on">
          ${icon(13, 16, svg`<path d="M0 0h9l4 4v12H0z" fill="#fff" /><path d="M1.500 1.500h6.500l3.500 3.500v9.500h-10z" fill="#f2f2f2" stroke="#444" /><path d="M7.500 1.500v4h4" fill="none" stroke="#444" />`)}
          Page1
        </button>
      </div>
    </main>`;
  }

  private prop(p: Prop, i: number) {
    if (p.type === "group") {
      return html`<div class="sub">
        <button>${chevron("wide")}${p.label}</button>
        <button class="edit" aria-label="Edit ${p.label}">
          ${icon(14, 14, svg`<path d="M4.500 7v6.500h8.500V5l-2.500-2.500H7" fill="#f4f4f4" stroke="#444" stroke-width="1.300" /><path d="M10 2.500V6h3" fill="none" stroke="#444" />
            <path d="M0 1h2v2H0zM2 2l2-1 4 4v2l-2 0z" fill="#1d66b0" />`)}
        </button>
      </div>`;
    }
    const id = `prop-${i}`;
    return html`<div class="prop">
      <label for=${id}>${p.label}</label>
      ${p.type === "select"
        ? html`<div class="sel"><select id=${id}><option>${p.value}</option></select>${chevron()}</div>`
        : html`<div class="field ${p.unit ? "unit" : ""}"><input id=${id} .value=${p.value} />${p.unit ?? nothing}</div>`}
    </div>`;
  }

  private panel() {
    return html`<aside class="side">
      <div class="panel">
        <header>
          <h2>Properties Text2</h2>
          <button aria-label="Close">${icon(9, 9, svg`<path d="M1 1l7 7M8 1L1 8" stroke="#fff" stroke-width="2.500" />`)}</button>
        </header>
        <button class="object"><span><b>Text2</b> TextObject</span>${chevron("wide")}</button>
        <div class="modes">
          <button class="on" aria-label="By category">
            ${icon(15, 15, svg`<path d="M0 0h6v6H0zM0 9h6v6H0z" fill="#333" /><path d="M1.500 3h3M3 1.500v3M1.500 12h3M3 10.500v3" stroke="#fff" /><path d="M7 1.500h4M7 4.500h4M7 7.500h4M7 10.500h4M7 13.500h4" stroke="#333" /><path d="M12 1.500h3M12 4.500h3M12 7.500h3M12 13.500h2" stroke="#333" stroke-dasharray="1 1" />`)}
          </button>
          <button aria-label="By name">
            ${icon(15, 15, svg`<path d="M0 0h7v7H0z" fill="#444" /><path d="M2 6V3l1.500-2L5 3v3M2 4.500h3" fill="none" stroke="#fff" /><path d="M1 9.500h5l-4 4h5" fill="none" stroke="#333" stroke-width="1.500" /><path d="M11 2v11M8 9.500l3 3.500 3-3.500" fill="none" stroke="#1d6fc0" stroke-width="1.300" />`)}
          </button>
        </div>
        <div class="list">
          <div class="props">
            <button class="cat">${icon(14, 12, svg`<path d="M2 8.500l5-5 5 5" fill="none" stroke="#555" stroke-width="2.200" />`)}Appearance</button>
            ${PROPS.map((p, i) => this.prop(p, i))}
          </div>
          <div class="track"><div class="thumb"></div></div>
        </div>
      </div>
    </aside>`;
  }

  private rail() {
    return html`<aside class="rail" aria-label="Panels">
      <button class="on" aria-label="Properties">
        ${icon(16, 16, svg`<path d="M1 15L8 8" stroke="#fff" stroke-width="5" /><circle cx="11" cy="5" r="5" fill="#fff" /><path d="M2 14L8 8" stroke="#333" stroke-width="2.500" stroke-linecap="round" /><circle cx="10.500" cy="5.500" r="3" fill="none" stroke="#333" stroke-width="2.500" /><path d="M11 5l2-5 3 3z" fill="#fff" />`)}
      </button>
      <button aria-label="Events">
        ${icon(12, 17, svg`<path d="M5 .5h6L8 6h3.500L1 16.500 4 9.500H.7z" fill="#e2a13a" stroke="#fff" /><path d="M6 2h3L6.500 7H9l-5 5 1-3.500H2.500z" fill="#b8720c" />`)}
      </button>
      <button aria-label="Report tree">
        ${icon(13, 17, svg`<path d="M4 6v8h3M4 9h3" fill="none" stroke="#444" /><rect x=".5" y=".5" width="5" height="5" fill="#2aa" stroke="#fff" /><rect x="1.500" y="1.500" width="3" height="3" fill="#357" stroke="#333" />
          <rect x="6.500" y="5.500" width="5" height="5" fill="#c84" stroke="#fff" /><rect x="7.500" y="6.500" width="3" height="3" fill="#c84" stroke="#333" /><rect x="6.500" y="11" width="5" height="5" fill="#c84" stroke="#fff" /><rect x="7.500" y="12" width="3" height="3" fill="#c84" stroke="#333" />`)}
      </button>
      <button aria-label="Data">
        ${icon(12, 16, svg`<path d="M.5 3v10c0 3 11 3 11 0V3z" fill="#cf8560" stroke="#e8c8b8" /><ellipse cx="6" cy="3" rx="5.500" ry="2.500" fill="#e0a080" stroke="#fff" />`)}
      </button>
      <button class="run" aria-label="Expand">${icon(17, 19, svg`<path d="M0 0l17 9.500L0 19z" fill="#5c7fb3" />`)}</button>
    </aside>`;
  }

  private status() {
    const box = (body: TemplateResult, label: string) =>
      html`<button aria-label=${label}>${icon(15, 14, svg`<rect width="15" height="14" fill="#fff" /><rect x="1.500" y="1.500" width="12" height="11" fill="#fff" stroke="#444" />${body}`)}</button>`;
    return html`<footer class="status">
      <div class="pos">
        ${icon(15, 15, svg`<path d="M0 0h4v15H1V4H0zM4 0h11v3H4z" fill="#fff" /><path d="M0 2.500h15M2.500 0v15" stroke="#444" stroke-dasharray="2 1" /><rect x="6.500" y="7.500" width="7" height="7" fill="#d08a60" stroke="#444" />`)}
        0.00 hi; 0.00 hi
      </div>
      <div class="pos">
        ${icon(15, 15, svg`<path d="M0 3h5v3H4v6h1v3H0v-3h1V6H0zM4 0h11v4H4z" fill="#fff" /><path d="M2.500 4v10M1 4.500h3M1 13.500h3M5.500 0v4M13.500 0v4M5 2h9" stroke="#444" fill="none" /><rect x="7.500" y="7.500" width="7" height="7" fill="#d08a60" stroke="#444" />`)}
        718.20 hi; 37.80 hi
      </div>
      <div class="sp">Text2</div>
      <div class="zoom">
        ${box(svg`<path d="M5.500 4.500L3.500 7l2 2.500M9.500 4.500l2 2.500-2 2.500" fill="none" stroke="#333" stroke-width="1.300" />`, "Page width")}
        ${box(svg`<path d="M5 5.500l2.500-2 2.500 2M5 8.500l2.500 2 2.500-2" fill="none" stroke="#333" stroke-width="1.300" />`, "Whole page")}
        ${box(svg`<path d="M4.500 4v6M10.500 4v6M7.500 5v1.500M7.500 8v1.500" stroke="#333" fill="none" />`, "Actual size")}
        <output>92%</output>
        <button class="pm" aria-label="Zoom out">-</button>
        <input type="range" min="0" max="100" value="44" aria-label="Zoom" />
        <button class="pm" aria-label="Zoom in">+</button>
      </div>
    </footer>`;
  }

  render() {
    return html`${this.topBar()}${this.ribbon()}
      <div class="work">${this.toolbox()}${this.editor()}${this.panel()}${this.rail()}</div>
      ${this.status()}`;
  }
}
